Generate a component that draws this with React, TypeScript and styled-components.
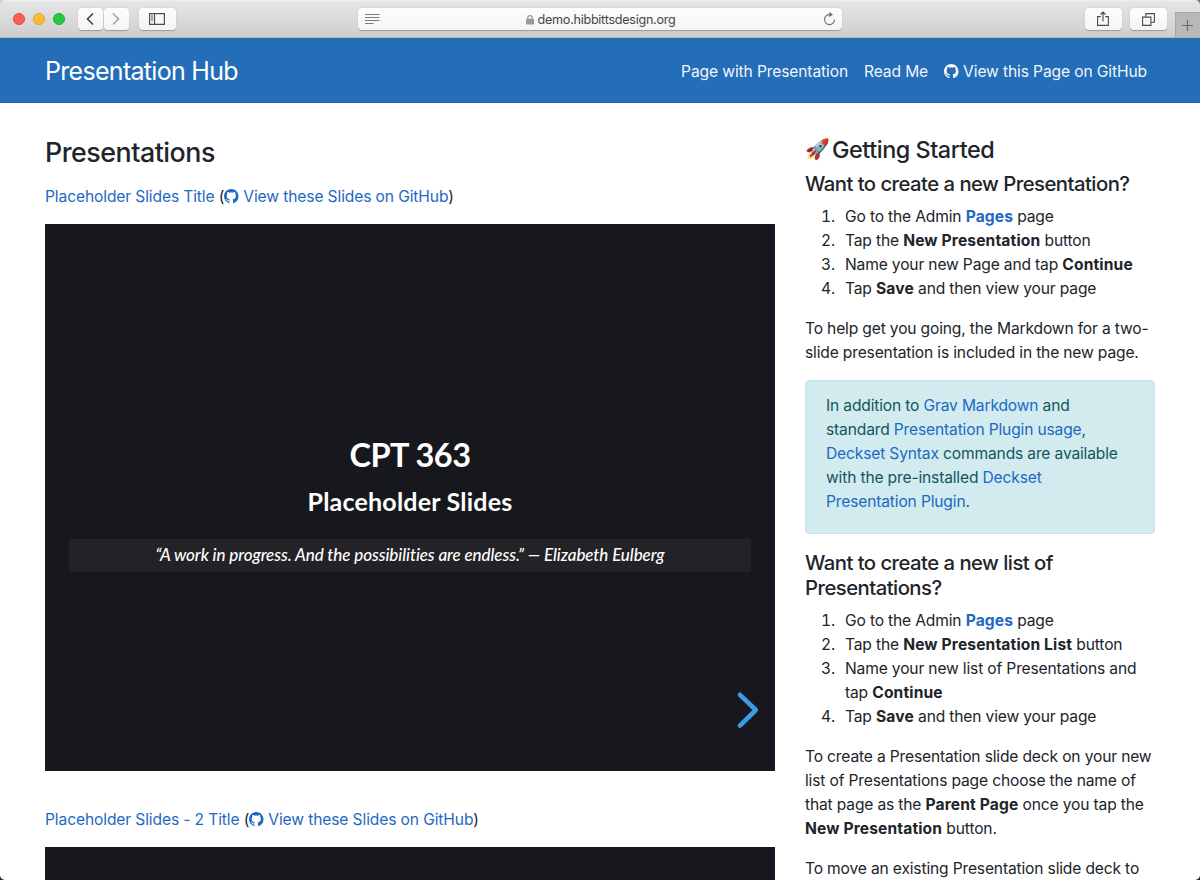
import React from "react";
import styled, { createGlobalStyle } from "styled-components";

const GlobalStyle = createGlobalStyle`
  * { box-sizing: border-box; }
  html, body { margin: 0; padding: 0; }
  body {
    height: 880px;
    overflow: hidden;
    background: #fff;
    color: #212529;
    font-family: "Inter", "Liberation Sans", sans-serif;
    font-size: 15.6px;
    line-height: 24px;
    letter-spacing: -0.16px;
  }
`;

const Window = styled.div`
  position: relative;
  width: 1200px;
  height: 880px;
  overflow: hidden;
  background: #fff;
`;

/* Browser toolbar */
const Toolbar = styled.div`
  display: flex;
  align-items: flex-start;
  height: 38px;
  padding: 8px 0 0 13px;
  background: linear-gradient(#f2f2f2 0, #e5e5e5 2px, #cecece 37px);
  border-bottom: 1px solid #b3b0ac;
`;

const Lights = styled.div`
  display: flex;
  gap: 8px;
  padding-top: 5px;
  margin-right: 13px;
`;

const Light = styled.span<{ $color: string; $edge: string }>`
  width: 12px;
  height: 12px;
  border-radius: 50%;
  background: ${(p) => p.$color};
  border: 0.5px solid ${(p) => p.$edge};
`;

const ToolButton = styled.button<{ $width: number; $ml?: number }>`
  display: flex;
  align-items: center;
  justify-content: center;
  width: ${(p) => p.$width}px;
  height: 22px;
  margin: 0 0 0 ${(p) => p.$ml ?? 0}px;
  padding: 0 1px 0 0;
  border: 0;
  border-radius: 4px;
  background: linear-gradient(#fdfdfd, #f4f4f4);
  box-shadow: 0 0.5px 1px rgba(0, 0, 0, 0.28);
  color: #4c4c4c;
`;

const AddressBar = styled.div`
  display: flex;
  align-items: center;
  justify-content: space-between;
  width: 484px;
  height: 22px;
  margin-left: 182px;
  padding: 0 6px 0 7px;
  border-radius: 4px;
  background: linear-gradient(#fdfdfd, #f4f4f4);
  box-shadow: 0 0.5px 1px rgba(0, 0, 0, 0.28);
`;

const Address = styled.div`
  display: flex;
  align-items: center;
  gap: 4px;
  font-size: 12.6px;
  line-height: 22px;
  letter-spacing: -0.27px;
  color: #474747;
  padding: 2px 2px 0 0;
`;

const NewTab = styled.div`
  display: flex;
  align-items: center;
  justify-content: center;
  width: 25px;
  height: 25px;
  margin: 4px 0 0 8px;
  padding-right: 2px;
  background: #b8b8b8;
  border-left: 1px solid #a8a8a8;
  border-top: 1px solid #acacac;
  color: #6a6a6a;
`;

/* Site navigation */
const NavBar = styled.header`
  display: flex;
  align-items: center;
  justify-content: space-between;
  height: 65px;
  padding: 0 53px 0 45px;
  background: #246eb9;
  border-bottom: 1px solid #2066ae;
  color: #fff;
`;

const Brand = styled.a`
  font-size: 25px;
  line-height: 38px;
  letter-spacing: -0.7px;
  padding-top: 1px;
`;

const NavLinks = styled.nav`
  display: flex;
  gap: 16px;
  padding-top: 3px;
  letter-spacing: -0.12px;
`;

const NavLink = styled.a`
  color: rgba(255, 255, 255, 0.96);
  white-space: nowrap;
`;

/* Page */
const Page = styled.main`
  display: grid;
  grid-template-columns: 730px 350px;
  column-gap: 30px;
  padding: 32px 45px 0;
`;

const PageTitle = styled.h1`
  margin: 1px 0 17px;
  font-size: 26.8px;
  line-height: 32px;
  font-weight: 500;
  letter-spacing: -0.48px;
`;

const SlideLinks = styled.p`
  height: 24px;
  margin: 0 0 15px;
  letter-spacing: -0.12px;
`;

const Link = styled.a<{ $strong?: boolean }>`
  color: #1d69c4;
  font-weight: ${(p) => (p.$strong ? 700 : "inherit")};
  letter-spacing: ${(p) => (p.$strong ? "0.1px" : "inherit")};
`;

const Slide = styled.section`
  display: flex;
  flex-direction: column;
  align-items: center;
  height: 547px;
  margin-bottom: 37px;
  padding: 211px 24px 0;
  background: #17181d;
  color: #fff;
  font-family: "Lato", sans-serif;
  position: relative;
`;

const SlideTitle = styled.h2`
  margin: 0;
  font-size: 32.5px;
  line-height: 40px;
  font-weight: 700;
  letter-spacing: -0.5px;
`;

const SlideSubtitle = styled.h3`
  margin: 10px 0 22px;
  font-size: 25px;
  line-height: 32px;
  font-weight: 700;
  letter-spacing: 0.21px;
`;

const Quote = styled.blockquote`
  width: 100%;
  height: 33px;
  margin: 0;
  background: #232227;
  text-align: center;
  font-size: 17px;
  line-height: 32px;
  font-style: italic;
  font-weight: 500;
  letter-spacing: -0.08px;
  white-space: nowrap;
`;

const NextArrow = styled.svg`
  position: absolute;
  right: 15px;
  bottom: 42px;
`;

/* Sidebar */
const SideTitle = styled.h2`
  display: flex;
  align-items: center;
  margin: 0 0 7px;
  font-size: 23.4px;
  line-height: 29px;
  font-weight: 500;
  letter-spacing: -0.45px;
`;

const Rocket = styled.span`
  width: 27px;
  font-size: 20px;
  letter-spacing: 0;
`;

const SideHeading = styled.h3`
  margin: 0 0 9px;
  font-size: 20.3px;
  line-height: 25px;
  font-weight: 500;
  letter-spacing: -0.53px;
  white-space: nowrap;
`;

const Steps = styled.ol`
  margin: 0 0 16px;
  padding: 0;
  list-style: none;
  counter-reset: step;
`;

const Step = styled.li`
  display: grid;
  grid-template-columns: 30px 1fr;
  column-gap: 10px;
  white-space: nowrap;
  counter-increment: step;
  &::before {
    content: counter(step) ".";
    text-align: right;
    font-variant-numeric: tabular-nums;
  }
`;

const Text = styled.p<{ $gap?: number }>`
  margin: 0 0 ${(p) => p.$gap ?? 16}px;
  white-space: nowrap;
`;

const Strong = styled.strong`
  font-weight: 700;
  letter-spacing: 0.13px;
`;

const Notice = styled.div`
  height: 154px;
  margin-bottom: 16px;
  padding: 13px 20px;
  border: 1px solid #bfe6ea;
  border-radius: 4px;
  background: #d1ebef;
  color: #145560;
  white-space: nowrap;
`;

const Mark = styled.svg`
  width: 14.5px;
  height: 14.5px;
  vertical-align: -1.5px;
  margin-right: 4.5px;
`;

const Corner = styled.svg<{ $v: "top" | "bottom"; $h: "left" | "right" }>`
  position: absolute;
  ${(p) => p.$v}: 0;
  ${(p) => p.$h}: 0;
`;

const GitHubMark = () => (
  <Mark viewBox="0 0 16 16" fill="currentColor" aria-hidden>
    <path d="M8 0C3.58 0 0 3.58 0 8c0 3.54 2.29 6.53 5.47 7.59.4.07.55-.17.55-.38 0-.19-.01-.82-.01-1.49-2.01.37-2.53-.49-2.69-.94-.09-.23-.48-.94-.82-1.13-.28-.15-.68-.52-.01-.53.63-.01 1.08.58 1.23.82.72 1.21 1.87.87 2.33.66.07-.52.28-.87.51-1.07-1.78-.2-3.64-.89-3.64-3.95 0-.87.31-1.59.82-2.15-.08-.2-.36-1.02.08-2.12 0 0 .67-.21 2.2.82.64-.18 1.32-.27 2-.27s1.36.09 2 .27c1.53-1.04 2.2-.82 2.2-.82.44 1.1.16 1.92.08 2.12.51.56.82 1.27.82 2.15 0 3.07-1.87 3.75-3.65 3.95.29.25.54.73.54 1.48 0 1.07-.01 1.93-.01 2.2 0 .21.15.46.55.38A8.01 8.01 0 0 0 16 8c0-4.42-3.58-8-8-8z" />
  </Mark>
);

const Chevron = ({ back, color }: { back?: boolean; color: string }) => (
  <svg width="8" height="14" viewBox="0 0 8 14" fill="none" stroke={color} strokeWidth="1.6">
    <path d={back ? "M7 1.5 1.5 7 7 12.5" : "M1 1.5 6.5 7 1 12.5"} />
  </svg>
);

export default function App() {
  return (
    <Window>
      <GlobalStyle />
      <Toolbar>
        <Lights>
          <Light $color="#fc5b57" $edge="#e2463f" />
          <Light $color="#fdbc2e" $edge="#e0a028" />
          <Light $color="#28c840" $edge="#1dad2b" />
        </Lights>
        <ToolButton $width={25}>
          <Chevron back color="#404040" />
        </ToolButton>
        <ToolButton $width={25} $ml={1}>
          <Chevron color="#a4a4a4" />
        </ToolButton>
        <ToolButton $width={37} $ml={10}>
          <svg width="16" height="12" viewBox="0 0 16 12" fill="none" stroke="currentColor">
            <path d="M.6.6h14.8v10.8H.6zM5.5.6v10.8" strokeWidth="1.2" />
            <path d="M2 3h2M2 5h2M2 7h2" strokeWidth="1" />
          </svg>
        </ToolButton>
        <AddressBar>
          <svg width="15" height="12" viewBox="0 0 15 12" stroke="#7d7d7d" strokeWidth="1">
            <path d="M0 1.5h14.5M0 4.5h14.5M0 7.5h14.5M0 10.5h8.5" />
          </svg>
          <Address>
            <svg width="8" height="11" viewBox="0 0 8 11">
              <path d="M1.8 4V2.8a2.2 2.2 0 0 1 4.4 0V4" fill="none" stroke="#999" strokeWidth="1.2" />
              <rect y="3.8" width="8" height="5.8" rx=".7" fill="#999" />
            </svg>
            demo.hibbittsdesign.org
          </Address>
          <svg width="13" height="14" viewBox="0 0 13 14">
            <path d="M6.8 2.6A5 5 0 1 0 11.5 7.6" fill="none" stroke="#707070" strokeWidth="1.1" />
            <path d="M6.3 0v5.2L10 2.6z" fill="#707070" />
          </svg>
        </AddressBar>
        <ToolButton $width={37} $ml={243}>
          <svg width="12" height="16" viewBox="0 0 12 16" fill="none" stroke="currentColor" strokeWidth="1.1">
            <path d="M3.8 5.6H.6v8.8h10.8V5.6H8.2M6 10.5V1.2M3.4 3.6 6 1l2.6 2.6" />
          </svg>
        </ToolButton>
        <ToolButton $width={37} $ml={8}>
          <svg width="13" height="13" viewBox="0 0 13 13" fill="none" stroke="currentColor" strokeWidth="1.1">
            <path d="M.6 4.1h8.3v8.3H.6zM3.8 4V.6h8.6v8.6H9" />
          </svg>
        </ToolButton>
        <NewTab>
          <svg width="11" height="11" viewBox="0 0 11 11" stroke="currentColor" strokeWidth="1.2">
            <path d="M5.5 0v11M0 5.5h11" />
          </svg>
        </NewTab>
      </Toolbar>

      <NavBar>
        <Brand>Presentation Hub</Brand>
        <NavLinks>
          <NavLink>Page with Presentation</NavLink>
          <NavLink>Read Me</NavLink>
          <NavLink>
            <GitHubMark />
            View this Page on GitHub
          </NavLink>
        </NavLinks>
      </NavBar>

      <Page>
        <div>
          <PageTitle>Presentations</PageTitle>
          <SlideLinks>
            <Link>Placeholder Slides Title</Link> (
            <Link>
              <GitHubMark />
              View these Slides on GitHub
            </Link>
            )
          </SlideLinks>
          <Slide>
            <SlideTitle>CPT 363</SlideTitle>
            <SlideSubtitle>Placeholder Slides</SlideSubtitle>
            <Quote>“A work in progress. And the possibilities are endless.” — Elizabeth Eulberg</Quote>
            <NextArrow width="24" height="38" viewBox="0 0 24 38" fill="none" stroke="#3b9ce6" strokeWidth="4.6" strokeLinecap="round" strokeLinejoin="round">
              <path d="M4 3.8 19.8 19 4 34.6" />
            </NextArrow>
          </Slide>
          <SlideLinks>
            <Link>Placeholder Slides - 2 Title</Link> (
            <Link>
              <GitHubMark />
              View these Slides on GitHub
            </Link>
            )
          </SlideLinks>
          <Slide />
        </div>

        <aside>
          <SideTitle>
            <Rocket>🚀</Rocket>Getting Started
          </SideTitle>
          <SideHeading>Want to create a new Presentation?</SideHeading>
          <Steps>
            <Step><span>Go to the Admin <Link $strong>Pages</Link> page</span></Step>
            <Step><span>Tap the <Strong>New Presentation</Strong> button</span></Step>
            <Step><span>Name your new Page and tap <Strong>Continue</Strong></span></Step>
            <Step><span>Tap <Strong>Save</Strong> and then view your page</span></Step>
          </Steps>
          <Text $gap={15}>
            To help get you going, the Markdown for a two-<br />
            slide presentation is included in the new page.
          </Text>
          <Notice>
            In addition to <Link>Grav Markdown</Link> and<br />
            standard <Link>Presentation Plugin usage</Link>,<br />
            <Link>Deckset Syntax</Link> commands are available<br />
            with the pre-installed <Link>Deckset<br />
            Presentation Plugin</Link>.
          </Notice>
          <SideHeading>
            Want to create a new list of<br />
            Presentations?
          </SideHeading>
          <Steps>
            <Step><span>Go to the Admin <Link $strong>Pages</Link> page</span></Step>
            <Step><span>Tap the <Strong>New Presentation List</Strong> button</span></Step>
            <Step><span>Name your new list of Presentations and<br />tap <Strong>Continue</Strong></span></Step>
            <Step><span>Tap <Strong>Save</Strong> and then view your page</span></Step>
          </Steps>
          <Text>
            To create a Presentation slide deck on your new<br />
            list of Presentations page choose the name of<br />
            that page as the <Strong>Parent Page</Strong> once you tap the<br />
            <Strong>New Presentation</Strong> button.
          </Text>
          <Text>To move an existing Presentation slide deck to</Text>
        </aside>
      </Page>

      <Corner $v="top" $h="left" width="5" height="5" viewBox="0 0 5 5"><path d="M0 0h5A5 5 0 0 0 0 5z" fill="#c9c9cd" /></Corner>
      <Corner $v="top" $h="right" width="5" height="5" viewBox="0 0 5 5"><path d="M5 0H0a5 5 0 0 1 5 5z" fill="#77788f" /></Corner>
      <Corner $v="bottom" $h="left" width="5" height="5" viewBox="0 0 5 5"><path d="M0 5h5A5 5 0 0 1 0 0z" fill="#23262c" /></Corner>
      <Corner $v="bottom" $h="right" width="5" height="5" viewBox="0 0 5 5"><path d="M5 5H0a5 5 0 0 0 5-5z" fill="#241c22" /></Corner>
    </Window>
  );
}
